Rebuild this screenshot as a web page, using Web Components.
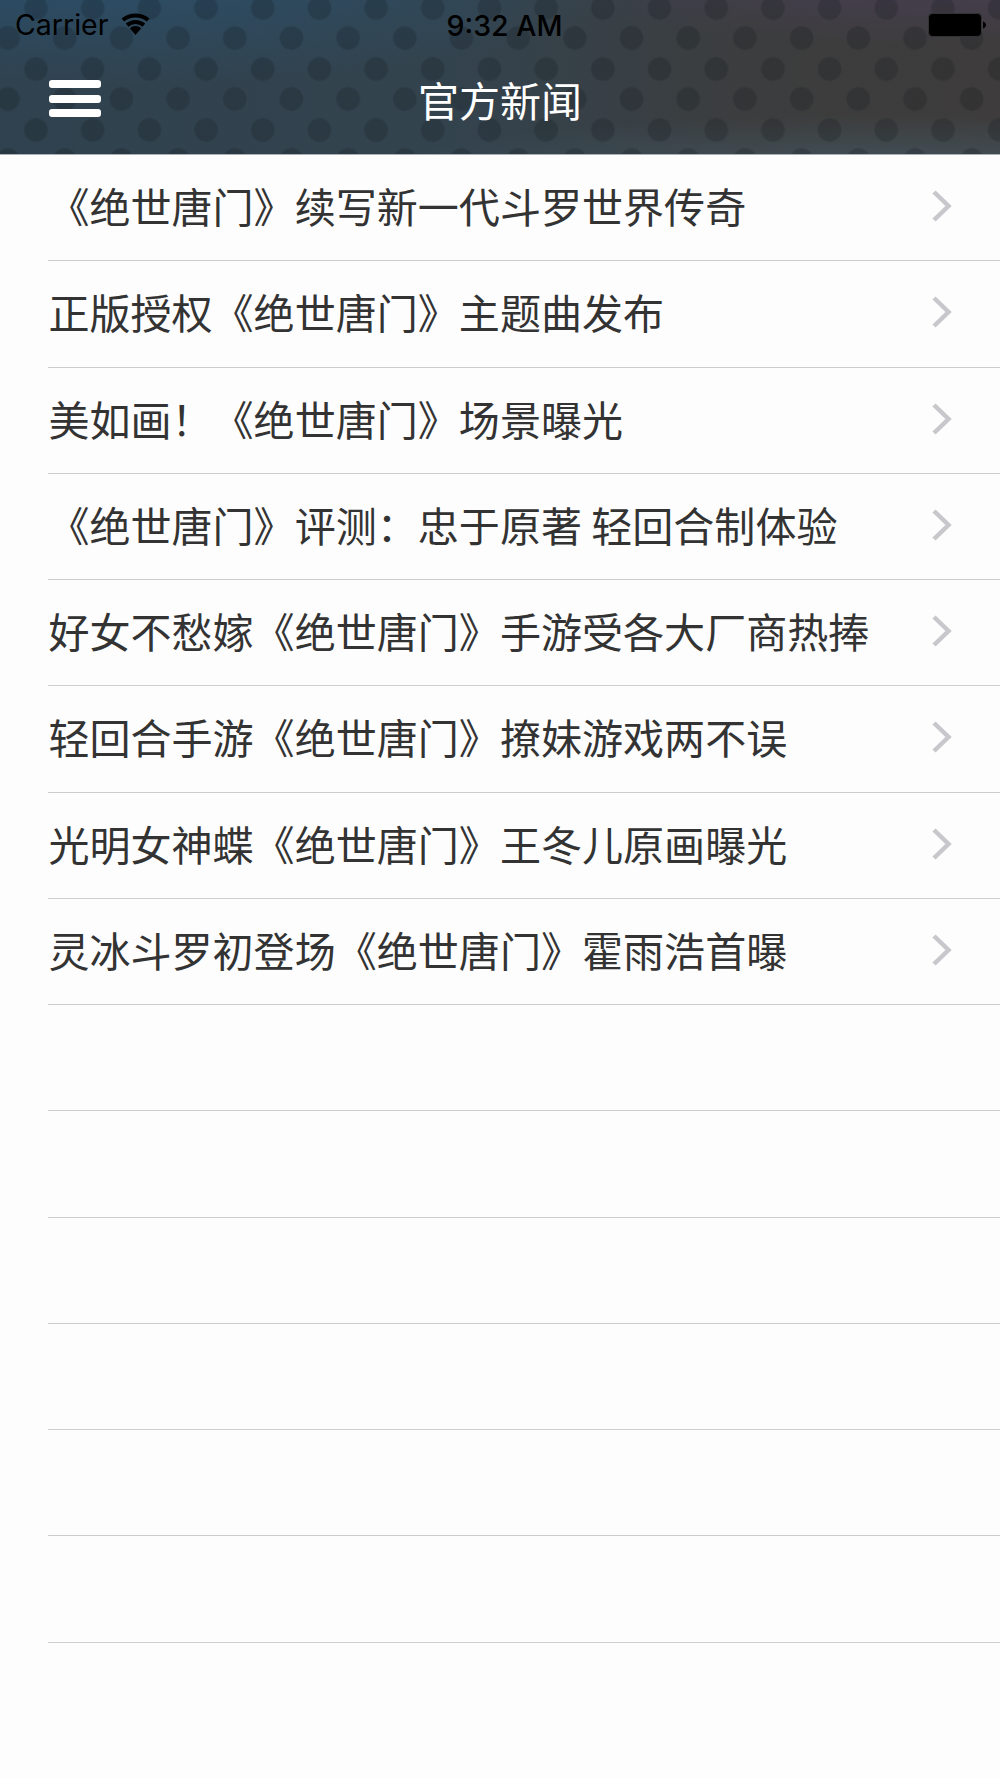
<!DOCTYPE html>
<html lang="zh"><head><meta charset="utf-8"><title>官方新闻</title>
<style>
html,body{margin:0;padding:0;background:#fdfdfd}
body{width:1000px;height:1778px;overflow:hidden;font-family:"Noto Sans CJK SC","Noto Sans",sans-serif}
</style></head><body>
<news-app>
  <app-header title-text="官方新闻"></app-header>
  <news-list>
    <news-row>《绝世唐门》续写新一代斗罗世界传奇</news-row>
    <news-row>正版授权《绝世唐门》主题曲发布</news-row>
    <news-row>美如画！《绝世唐门》场景曝光</news-row>
    <news-row>《绝世唐门》评测：忠于原著 轻回合制体验</news-row>
    <news-row>好女不愁嫁《绝世唐门》手游受各大厂商热捧</news-row>
    <news-row>轻回合手游《绝世唐门》撩妹游戏两不误</news-row>
    <news-row>光明女神蝶《绝世唐门》王冬儿原画曝光</news-row>
    <news-row>灵冰斗罗初登场《绝世唐门》霍雨浩首曝</news-row>
    <news-row empty></news-row><news-row empty></news-row><news-row empty></news-row>
    <news-row empty></news-row><news-row empty></news-row><news-row empty></news-row>
  </news-list>
</news-app>
<script>
function def(name,html,init){customElements.define(name,class extends HTMLElement{constructor(){super();this.attachShadow({mode:'open'}).innerHTML=html;}connectedCallback(){init&&init(this);}});}
def('news-app',`<style>:host{display:block;width:1000px;height:1778px;background:#fdfdfd}</style><slot></slot>`);
def('news-list',`<style>:host{display:block}</style><slot></slot>`);
def('status-bar',`<style>
:host{display:flex;align-items:center;height:50px;padding:0 14px 0 15px;color:#000;font:400 28.5px/1 Inter,"Liberation Sans",sans-serif;position:relative}
.l{display:flex;align-items:center;gap:13px;flex:1}
.l svg{margin-top:-2px}
.t{position:absolute;left:9px;right:0;top:11px;text-align:center;font-family:Inter,sans-serif;font-weight:500;font-size:28.5px;line-height:30px}
svg{display:block}
</style>
<div class="l"><span>Carrier</span><svg width="29" height="22" viewBox="0 0 29 22"><path d="M14.5 22 8.800 15.200a8.800 8.800 0 0 1 11.400 0Z"/><path d="M4.800 10.600a15 15 0 0 1 19.400 0l-2.600 3.100a11 11 0 0 0-14.200 0Z"/><path d="M.6 5.500a21.500 21.500 0 0 1 27.800 0l-2.600 3.100a17.500 17.500 0 0 0-22.600 0Z"/></svg></div>
<span class="t">9:32 AM</span>
<svg width="58" height="24" viewBox="0 0 58 24"><rect x=".5" y=".5" width="53" height="23" rx="4" fill="#000" stroke="#333"/><path d="M55 8.500c1.600.4 3 1.600 3 3.500s-1.400 3.100-3 3.500Z"/></svg>`);
def('menu-icon',`<style>:host{display:flex;flex-direction:column;gap:6.5px;width:52px}i{display:block;height:8px;border-radius:3px;background:#fff}</style><i></i><i></i><i></i>`);
def('app-header',`<style>
:host{display:block;height:154px;border-bottom:1px solid #aab0b5;position:relative;
background:
 radial-gradient(circle closest-side,rgba(10,15,20,.2) 11px,rgba(10,15,20,0) 12.500px) 7.65px -22.5px/56.7px 61px,
 radial-gradient(circle closest-side,rgba(10,15,20,.2) 11px,rgba(10,15,20,0) 12.500px) -20.35px 7.5px/56.7px 61px,
 radial-gradient(ellipse 560px 110px at 90px -25px,rgba(35,95,140,.42),rgba(35,95,140,0)),
 radial-gradient(ellipse 420px 60px at 950px -15px,rgba(85,65,115,.36),rgba(85,65,115,0)),
 radial-gradient(ellipse 500px 50px at 900px 165px,rgba(70,100,115,.5),rgba(70,100,115,0)),
 linear-gradient(90deg,#30424f 0,#33434e 45%,#3c3d3e 75%,#3e3c3c 100%);}
nav{display:flex;align-items:center;justify-content:center;height:104px;position:relative;padding-bottom:5px;box-sizing:border-box}
menu-icon{position:absolute;left:49px;top:30px}
h1{margin:0;color:#fff;font:400 41px/1 "Noto Sans CJK SC",sans-serif}
</style><status-bar></status-bar><nav><menu-icon></menu-icon><h1></h1></nav>`,el=>{el.shadowRoot.querySelector('h1').textContent=el.getAttribute('title-text')});
def('news-row',`<style>
:host{display:block;height:106.28px;padding-left:48px;box-sizing:border-box}
.r{display:flex;align-items:center;height:100%;box-sizing:border-box;border-bottom:1px solid #cdcdd0;padding:0 47px 4px .4px;color:#333;font:400 41.06px/1 "Noto Sans CJK SC",sans-serif;white-space:nowrap}
.x{flex:1;min-width:0}
svg{display:block;flex:none;margin-top:1px}
:host([empty]) svg{display:none}
</style><div class="r"><span class="x"><slot></slot></span><svg width="22" height="34" viewBox="0 0 22 34"><path d="M3 3 17.500 17 3 31" fill="none" stroke="#c7c7cc" stroke-width="4.500"/></svg></div>`);
</script>
</body></html>
